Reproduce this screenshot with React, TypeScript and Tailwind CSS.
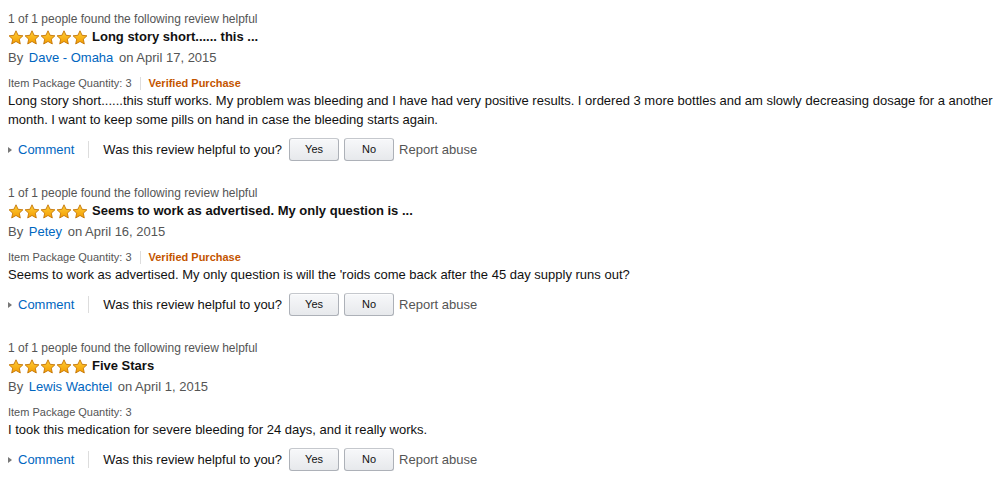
import React from "react";

type Review = {
  title: string;
  author: string;
  date: string;
  verified: boolean;
  body: string;
};

const reviews: Review[] = [
  {
    title: "Long story short...... this ...",
    author: "Dave - Omaha",
    date: "on April 17, 2015",
    verified: true,
    body: "Long story short......this stuff works. My problem was bleeding and I have had very positive results. I ordered 3 more bottles and am slowly decreasing dosage for a another month. I want to keep some pills on hand in case the bleeding starts again.",
  },
  {
    title: "Seems to work as advertised. My only question is ...",
    author: "Petey",
    date: "on April 16, 2015",
    verified: true,
    body: "Seems to work as advertised. My only question is will the 'roids come back after the 45 day supply runs out?",
  },
  {
    title: "Five Stars",
    author: "Lewis Wachtel",
    date: "on April 1, 2015",
    verified: false,
    body: "I took this medication for severe bleeding for 24 days, and it really works.",
  },
];

const Star = () => (
  <svg width="16" height="15" viewBox="0 0 24 23" className="block">
    <defs>
      <linearGradient id="starFill" x1="0" y1="0" x2="0" y2="1">
        <stop offset="0%" stopColor="#ffcf3a" />
        <stop offset="100%" stopColor="#f39c00" />
      </linearGradient>
    </defs>
    <path
      d="M12 1.2l3.2 6.9 7.4.8-5.5 5.1 1.5 7.4L12 17.6l-6.6 3.8 1.5-7.4L1.4 8.9l7.4-.8z"
      fill="url(#starFill)"
      stroke="#c07000"
      strokeWidth="1.3"
      strokeLinejoin="round"
    />
  </svg>
);

const VoteButton = ({ label }: { label: string }) => (
  <button className="w-[50px] h-[23px] rounded-[3px] border border-[#adb1b8] border-t-[#c5c8cd] bg-gradient-to-b from-[#f7f8fa] to-[#e7e9ec] text-[11px] text-[#111] shadow-[0_1px_0_rgba(255,255,255,0.6)_inset]">
    {label}
  </button>
);

const ReviewItem = ({ review }: { review: Review }) => (
  <div className="mb-[23px]">
    <div className="text-[12px] leading-[16px] text-[#555] pt-px -mb-px">
      1 of 1 people found the following review helpful
    </div>
    <div className="flex items-center h-[22px]">
      <div className="flex mr-[4px]">
        <Star />
        <Star />
        <Star />
        <Star />
        <Star />
      </div>
      <span className="text-[13px] font-bold text-[#111]">{review.title}</span>
    </div>
    <div className="text-[13px] leading-[18px] text-[#555] pt-px -mb-px">
      By <a className="text-[#0066c0] ml-[2px] mr-[2px]">{review.author}</a> {review.date}
    </div>
    <div className="flex items-center mt-[9px] text-[11px] leading-[16px]">
      <span className="text-[#555]">Item Package Quantity: 3</span>
      {review.verified && (
        <>
          <span className="mx-[8px] h-[13px] w-px bg-[#ddd]" />
          <span className="font-bold text-[#c45500]">Verified Purchase</span>
        </>
      )}
    </div>
    <p className="text-[13px] leading-[19px] text-[#111]">{review.body}</p>
    <div className="flex items-center mt-[9px] h-[23px] text-[13px]">
      <span className="w-0 h-0 border-y-[3.5px] border-y-transparent border-l-[4px] border-l-[#777] mr-[6px]" />
      <a className="text-[#0066c0]">Comment</a>
      <span className="mx-[14px] h-[17px] w-px bg-[#ddd]" />
      <span className="text-[#111] mr-[7px]">Was this review helpful to you?</span>
      <div className="flex gap-[5px]">
        <VoteButton label="Yes" />
        <VoteButton label="No" />
      </div>
      <a className="ml-[5px] text-[#555]">Report abuse</a>
    </div>
  </div>
);

export default function App() {
  return (
    <div
      className="bg-white w-[1005px] min-h-[477px] pl-[8px] pt-[10px]"
      style={{ fontFamily: '"Liberation Sans", Arial, sans-serif' }}
    >
      {reviews.map((r) => (
        <ReviewItem key={r.author} review={r} />
      ))}
    </div>
  );
}
